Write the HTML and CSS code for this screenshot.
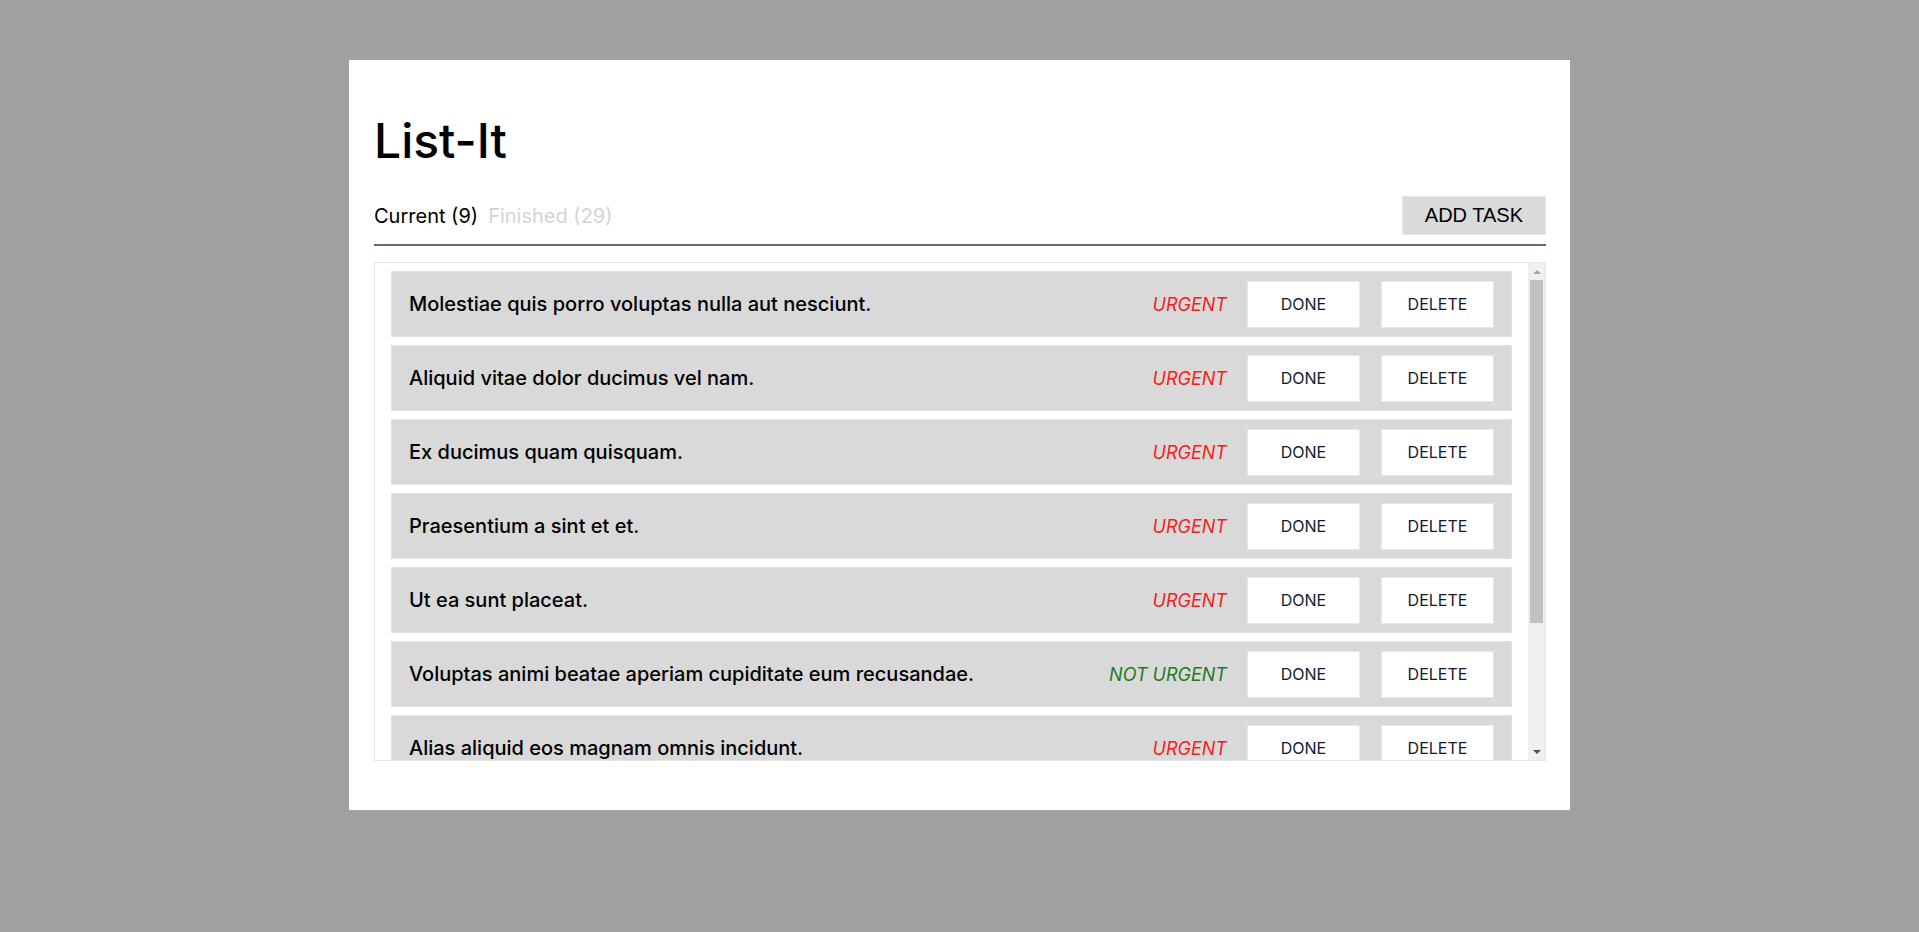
FILE: index.html
```html
<!DOCTYPE html>
<html lang="en">
<head>
<meta charset="utf-8">
<title>List-It</title>
<link rel="stylesheet" href="styles.css">
</head>
<body>
<main class="card">
  <h1 class="title">List-It</h1>
  <div class="header">
    <nav class="tabs">
      <span class="tab tab-active">Current (9)</span>
      <span class="tab tab-inactive">Finished (29)</span>
    </nav>
    <button class="add-btn">ADD TASK</button>
  </div>
  <div class="list-box">
    <ul class="list">
      <li class="row"><span class="task">Molestiae quis porro voluptas nulla aut nesciunt.</span><span class="prio urgent">URGENT</span><button class="act">DONE</button><button class="act">DELETE</button></li>
      <li class="row"><span class="task">Aliquid vitae dolor ducimus vel nam.</span><span class="prio urgent">URGENT</span><button class="act">DONE</button><button class="act">DELETE</button></li>
      <li class="row"><span class="task">Ex ducimus quam quisquam.</span><span class="prio urgent">URGENT</span><button class="act">DONE</button><button class="act">DELETE</button></li>
      <li class="row"><span class="task">Praesentium a sint et et.</span><span class="prio urgent">URGENT</span><button class="act">DONE</button><button class="act">DELETE</button></li>
      <li class="row"><span class="task">Ut ea sunt placeat.</span><span class="prio urgent">URGENT</span><button class="act">DONE</button><button class="act">DELETE</button></li>
      <li class="row"><span class="task">Voluptas animi beatae aperiam cupiditate eum recusandae.</span><span class="prio not-urgent">NOT URGENT</span><button class="act">DONE</button><button class="act">DELETE</button></li>
      <li class="row"><span class="task">Alias aliquid eos magnam omnis incidunt.</span><span class="prio urgent">URGENT</span><button class="act">DONE</button><button class="act">DELETE</button></li>
      <li class="row"><span class="task">Quia tempora et quo.</span><span class="prio not-urgent">NOT URGENT</span><button class="act">DONE</button><button class="act">DELETE</button></li>
      <li class="row"><span class="task">Et sed consequatur dolores.</span><span class="prio urgent">URGENT</span><button class="act">DONE</button><button class="act">DELETE</button></li>
    </ul>
    <div class="scrollbar" aria-hidden="true">
      <div class="sb-btn"><span class="arrow-up"></span></div>
      <div class="sb-track"><div class="sb-thumb"></div></div>
      <div class="sb-btn"><span class="arrow-down"></span></div>
    </div>
  </div>
</main>
</body>
</html>
```
FILE: styles.css
```css
html, body {
  margin: 0;
  padding: 0;
}
body {
  background: #a0a0a0;
  font-family: Inter, "Noto Sans", sans-serif;
  min-height: 932px;
}
.card {
  box-sizing: border-box;
  width: 1221px;
  height: 750px;
  margin: 60px auto 0;
  background: #ffffff;
  padding: 0 24px 0 25px;
  display: flex;
  flex-direction: column;
}
.title {
  margin: 51px 0 0;
  font-size: 48px;
  line-height: 60px;
  font-weight: 500;
  color: #000;
}
.header {
  margin-top: 25px;
  display: flex;
  align-items: center;
  justify-content: space-between;
  padding-bottom: 9px;
  border-bottom: 2px solid #5f6b80;
}
.tabs {
  display: flex;
  gap: 10px;
  font-size: 20px;
  line-height: 24px;
}
.tab-active { color: #000; }
.tab-inactive { color: #d4d4d4; }
.add-btn {
  box-sizing: border-box;
  height: 39px;
  padding: 0 22px;
  background: #dadada;
  border: 1px solid #e6e6e6;
  font-family: "Liberation Sans", Arial, sans-serif;
  font-size: 20px;
  color: #000;
}
.list-box {
  margin-top: 16px;
  box-sizing: border-box;
  height: 499px;
  border: 1px solid #e6e6e6;
  display: flex;
}
.list {
  flex: 1;
  list-style: none;
  margin: 0;
  padding: 8px 16px 0 16px;
  overflow: hidden;
  display: flex;
  flex-direction: column;
  gap: 8px;
}
.scrollbar {
  width: 17px;
  flex: 0 0 17px;
  background: #f0f0f0;
  display: flex;
  flex-direction: column;
}
.sb-btn {
  height: 17px;
  flex: 0 0 17px;
  display: flex;
  align-items: center;
  justify-content: center;
}
.arrow-up {
  width: 0;
  height: 0;
  border-left: 4px solid transparent;
  border-right: 4px solid transparent;
  border-bottom: 4px solid #a3a3a3;
}
.arrow-down {
  width: 0;
  height: 0;
  border-left: 4px solid transparent;
  border-right: 4px solid transparent;
  border-top: 4px solid #505050;
}
.sb-track {
  flex: 1;
  padding: 0 2px;
}
.sb-thumb {
  height: 343px;
  background: #c1c1c1;
}
.row {
  flex: 0 0 auto;
  box-sizing: border-box;
  height: 66px;
  display: flex;
  align-items: center;
  background: #d9d9d9;
  border: 1px solid #e2e2e2;
  padding: 0 17px 0 17px;
}
.task {
  flex: 1;
  font-size: 20px;
  font-weight: 500;
  color: #000;
  white-space: nowrap;
}
.prio {
  font-size: 18px;
  font-style: italic;
  margin-right: 20px;
}
.urgent { color: #ff1a1a; }
.not-urgent { color: #1f7a1f; }
.act {
  box-sizing: border-box;
  width: 113px;
  height: 47px;
  background: #fff;
  border: 1px solid #e8e8e8;
  font-family: Inter, "Noto Sans", sans-serif;
  font-size: 16px;
  color: #14182e;
  padding: 0;
}
.act + .act { margin-left: 21px; }
```
